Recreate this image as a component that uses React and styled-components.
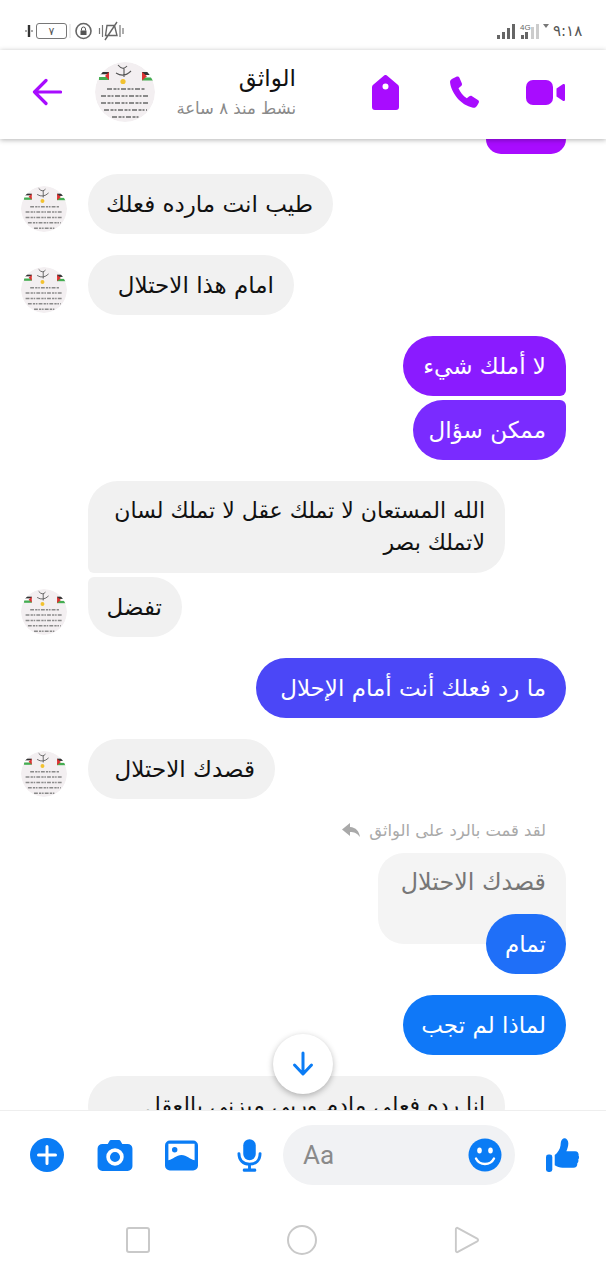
import React from "react";
import styled, { createGlobalStyle } from "styled-components";

const Global = createGlobalStyle`
  html, body { margin: 0; padding: 0; background: #fff; }
  * { box-sizing: border-box; }
`;

function Avatar({ size }) {
  return (
    <AvatarWrap $size={size}>
      <svg viewBox="0 0 60 60" width={size} height={size}>
        <circle cx="30" cy="30" r="30" fill="#f3eff1" />
        <rect x="4" y="10" width="10" height="2.500" fill="#333" />
        <rect x="4" y="12.500" width="10" height="2.500" fill="#fff" />
        <rect x="4" y="15" width="10" height="3" fill="#45ad52" />
        <path d="M14 10v8l-4-4Z" fill="#d33" />
        <rect x="47" y="10" width="12" height="3" fill="#333" />
        <rect x="47" y="13" width="12" height="2.500" fill="#fff" />
        <rect x="47" y="15.500" width="12" height="3" fill="#45ad52" />
        <path d="M47 10v8.500l5-4.200Z" fill="#d33" />
        <circle cx="28" cy="19.500" r="2.600" fill="#f2c230" />
        <path d="M23 3 q5 6 9 1 M21 11 q8 5 15 -2 M29 6 v9" fill="none" stroke="#555" strokeWidth="1.100" />
        <g stroke="#8a8a8a" strokeWidth="2" strokeDasharray="5 1.500 3 1 2 1.500" fill="none">
          <path d="M12 27 H50" />
          <path d="M6 34 H54" />
          <path d="M6 41 H54" />
          <path d="M9 48 H52" />
          <path d="M17 55 H44" />
        </g>
      </svg>
    </AvatarWrap>
  );
}

const ArrowBack = () => (
  <svg width="32" height="32" viewBox="0 0 32 32" fill="none" stroke="#a80cff" strokeWidth="3.200" strokeLinecap="round" strokeLinejoin="round">
    <path d="M30.500 16H4.500M16 4.500 4.500 16 16 27.500" />
  </svg>
);

const TagIcon = () => (
  <svg width="27" height="35" viewBox="0 0 27 35">
    <path fill="#a80cff" fillRule="evenodd" d="M11.800.7a2.600 2.600 0 0 1 3.400 0l10.600 9c.8.6 1.200 1.500 1.200 2.500V32a3 3 0 0 1-3 3H3a3 3 0 0 1-3-3V12.200c0-1 .4-1.900 1.200-2.500ZM13.500 8.500a3 3 0 1 0 0 6 3 3 0 0 0 0-6Z" />
  </svg>
);

const PhoneIcon = () => (
  <svg width="32" height="32" viewBox="0 0 32 34">
    <path fill="#a80cff" d="M2.500 2.800 6.800.7c1.400-.6 2.700-.1 3.300 1.200l2.500 5.800c.5 1.100.2 2.300-.7 3l-2.800 2.200c1.700 4 4.700 8 8.800 10.700l2.700-2.100c.9-.7 2-.7 2.900-.1l6.200 4c1.100.7 1.500 2 .9 3.100l-1.800 3.100c-.9 1.600-2.500 2.400-4.300 2.100C11.500 31.500 1 17.500.1 6.500 0 5 .9 3.600 2.500 2.800Z" />
  </svg>
);

const VideoIcon = () => (
  <svg width="39" height="25" viewBox="0 0 39 25">
    <rect x="0" y="0" width="27" height="25" rx="7" fill="#a80cff" />
    <path fill="#a80cff" d="m30.500 8.500 6.300-4.300c.9-.6 2.200 0 2.200 1v14.600c0 1-1.300 1.600-2.200 1l-6.300-4.300Z" />
  </svg>
);

const ReplyIcon = () => (
  <svg width="20" height="16" viewBox="0 0 20 16">
    <path fill="#a9a9a9" d="M9 1 1 7.500 9 14v-4c4 0 7 1 10 5-1-6-4-9.500-10-10Z" />
  </svg>
);

const DownIcon = () => (
  <svg width="24" height="26" viewBox="0 0 24 26" fill="none" stroke="#0a7cf5" strokeWidth="3" strokeLinecap="round" strokeLinejoin="round">
    <path d="M12 2v20M3.500 14 12 23l8.500-9" />
  </svg>
);

const PlusIcon = () => (
  <svg width="34" height="34" viewBox="0 0 34 34">
    <circle cx="17" cy="17" r="17" fill="#0a7cf5" />
    <path d="M17 8.500v17M8.500 17h17" stroke="#fff" strokeWidth="3" strokeLinecap="round" />
  </svg>
);

const CameraIcon = () => (
  <svg width="36" height="31" viewBox="0 0 36 32">
    <path fill="#0a7cf5" fillRule="evenodd" d="M12 1.500C12.500.5 13.500 0 14.500 0h7c1 0 2 .5 2.500 1.500L25.500 4H31a5 5 0 0 1 5 5v18a5 5 0 0 1-5 5H5a5 5 0 0 1-5-5V9a5 5 0 0 1 5-5h5.500ZM18 8.500a9 9 0 1 0 0 18 9 9 0 0 0 0-18Zm0 3.800a5.200 5.200 0 1 1 0 10.400 5.200 5.200 0 0 1 0-10.400Z" />
  </svg>
);

const ImageIcon = () => (
  <svg width="33" height="31" viewBox="0 0 34 31">
    <rect width="34" height="31" rx="5" fill="#0a7cf5" />
    <path fill="#fff" d="M3.500 3.500h27v17c-5-1-8-5.500-13.500-5.500S8.500 19.500 3.500 20.500Z" />
    <circle cx="10" cy="9.500" r="2.800" fill="#0a7cf5" />
  </svg>
);

const MicIcon = () => (
  <svg width="25" height="33" viewBox="0 0 26 34">
    <rect x="6.500" y="0" width="13" height="22" rx="6.500" fill="#0a7cf5" />
    <path d="M2 15c0 7 4.500 11 11 11s11-4 11-11" fill="none" stroke="#0a7cf5" strokeWidth="3" strokeLinecap="round" />
    <path d="M13 26v6" stroke="#0a7cf5" strokeWidth="3" />
    <rect x="6" y="30.500" width="14" height="3.500" rx="1.500" fill="#0a7cf5" />
  </svg>
);

const SmileIcon = () => (
  <svg width="34" height="34" viewBox="0 0 34 34">
    <circle cx="17" cy="17" r="16.500" fill="#0a7cf5" />
    <ellipse cx="11.500" cy="12.500" rx="2.300" ry="3" fill="#fff" />
    <ellipse cx="22.500" cy="12.500" rx="2.300" ry="3" fill="#fff" />
    <path d="M8 20.500c2 4 5 5.500 9 5.500s7-1.500 9-5.500" fill="none" stroke="#fff" strokeWidth="2.400" strokeLinecap="round" />
  </svg>
);

const LikeIcon = () => (
  <svg width="33" height="35" viewBox="0 0 34 36">
    <rect x="0" y="17" width="6.500" height="18" rx="2.500" fill="#0a7cf5" />
    <path fill="#0a7cf5" d="M9 17.500c3-2 5.500-6 6-10 .3-2.500.3-6 3-7 2.500-.8 5 1.500 5 5 0 3-1 6-2 8h9c3 0 4 2.500 3.500 4.500.8 1.200.8 3-.3 4.200.5 1.500 0 3-1 3.800.3 2.500-1 4.500-4 4.500H17c-3 0-5.500-1-8-2.500Z" />
  </svg>
);

const StatusLeft = () => (
  <svg width="101" height="20" viewBox="0 0 101 20" fill="none">
    <path d="M1 10h2M7 10h2" stroke="#555" strokeWidth="1.200" />
    <path d="M5 4v12" stroke="#333" strokeWidth="2.400" />
    <rect x="12.500" y="2.500" width="30" height="15" rx="2.500" stroke="#777" strokeWidth="1" />
    <text x="27.500" y="14" fontSize="11" fill="#555" textAnchor="middle" fontFamily="DejaVu Sans, sans-serif">٧</text>
    <path d="M46 3v14" stroke="#ddd" strokeWidth="1" />
    <circle cx="59.500" cy="10" r="7.500" stroke="#666" strokeWidth="1.600" />
    <rect x="56.500" y="9.500" width="6" height="4.500" fill="#555" />
    <path d="M57.500 9.500V8a2 2 0 0 1 4 0v1.500" stroke="#555" />
    <path d="M75.500 7v6M78.500 4v12M96 4v12M99 7v6" stroke="#777" strokeWidth="1.200" />
    <path d="M83 4.500h7.500l2.500 10H81.500ZM81 19 93 1" stroke="#666" strokeWidth="1.400" />
  </svg>
);

const Signal = () => (
  <svg width="56" height="20" viewBox="0 0 56 20">
    <g fill="#666">
      <rect x="0" y="14" width="3" height="4" />
      <rect x="5" y="11" width="3" height="7" />
      <rect x="10" y="7" width="3" height="11" />
      <rect x="15" y="3" width="3" height="15" />
      <rect x="24" y="14" width="3" height="4" />
      <rect x="28" y="11" width="3" height="7" />
    </g>
    <g fill="#ccc">
      <rect x="34" y="6" width="3" height="12" />
      <rect x="39" y="3" width="3" height="15" />
    </g>
    <text x="23" y="9" fontSize="8" fill="#666" fontFamily="Liberation Sans, sans-serif">4G</text>
    <path d="M46 3h6l-3 4Z" fill="#777" />
  </svg>
);

const messages = [
  { id: 1, side: "left", text: "طيب انت مارده فعلك", w: 245, gap: 20 },
  { id: 2, side: "left", text: "امام هذا الاحتلال", w: 206, gap: 21 },
  { id: 3, side: "right", text: "لا أملك شيء", w: 163, gap: 21, color: "#8a1bff", corner: "bottom" },
  { id: 4, side: "right", text: "ممكن سؤال", w: 153, gap: 4, color: "#7a2bff", corner: "top" },
  { id: 5, side: "left", text: "الله المستعان لا تملك عقل لا تملك لسان لاتملك بصر", w: 417, gap: 21, noAvatar: true, corner: "bottom", small: true },
  { id: 6, side: "left", text: "تفضل", w: 94, gap: 4, corner: "top" },
  { id: 7, side: "right", text: "ما رد فعلك أنت أمام الإحلال", w: 310, gap: 21, color: "#4b47f7" },
  { id: 8, side: "left", text: "قصدك الاحتلال", w: 187, gap: 21 },
];

function Message({ m }) {
  const bubble = (
    <Bubble $width={m.w} $color={m.color} $side={m.side} $corner={m.corner} $small={m.small}>
      {m.text}
    </Bubble>
  );
  if (m.side === "right") {
    return <RightRow $gap={m.gap}>{bubble}</RightRow>;
  }
  return (
    <LeftRow $gap={m.gap}>
      {m.noAvatar ? <AvatarSlot /> : <RowAvatar><Avatar size={46} /></RowAvatar>}
      {bubble}
    </LeftRow>
  );
}

export default function App() {
  return (
    <>
      <Global />
      <Screen>
        <StatusBar>
          <StatusLeft />
          <StatusEnd>
            <Signal />
            <Clock>٩:١٨</Clock>
          </StatusEnd>
        </StatusBar>
        <Header>
          <BackButton><ArrowBack /></BackButton>
          <Avatar size={60} />
          <TitleBlock>
            <Title>الواثق</Title>
            <Subtitle>نشط منذ ٨ ساعة</Subtitle>
          </TitleBlock>
          <Actions>
            <ActionSlot><TagIcon /></ActionSlot>
            <ActionSlot><PhoneIcon /></ActionSlot>
            <ActionSlot><VideoIcon /></ActionSlot>
          </Actions>
        </Header>
        <Thread>
          <TopSliver />
          {messages.map((m) => (
            <Message key={m.id} m={m} />
          ))}
          <ReplyNote>
            <ReplyIcon />
            <span>لقد قمت بالرد على الواثق</span>
          </ReplyNote>
          <QuoteRow>
            <Quote>قصدك الاحتلال</Quote>
          </QuoteRow>
          <RightRow $gap={0}>
            <Bubble $width={80} $color="#1f6ff8" $side="right">تمام</Bubble>
          </RightRow>
          <RightRow $gap={21}>
            <Bubble $width={163} $color="#0f78f8" $side="right">لماذا لم تجب</Bubble>
          </RightRow>
          <LeftRow $gap={21}>
            <AvatarSlot />
            <Bubble $width={417} $side="left" $small>انا رده فعلي مادم وربي ميزني بالعقل</Bubble>
          </LeftRow>
          <JumpButton><DownIcon /></JumpButton>
        </Thread>
        <Composer>
          <Tool $after={33}><PlusIcon /></Tool>
          <Tool $after={32}><CameraIcon /></Tool>
          <Tool $after={39}><ImageIcon /></Tool>
          <Tool $after={21}><MicIcon /></Tool>
          <InputPill>
            <Placeholder>Aa</Placeholder>
            <SmileIcon />
          </InputPill>
          <Tool $after={0} $before={31}><LikeIcon /></Tool>
        </Composer>
        <NavBar>
          <NavSquare />
          <NavCircle />
          <svg width="26" height="30" viewBox="0 0 28 30" fill="none">
            <path d="M2 3.500c0-1.500 1.200-2 2.200-1.300L25 13.500c1.300.8 1.300 2.200 0 3L4.200 27.800C3.200 28.500 2 28 2 26.500Z" stroke="#c9c9c9" strokeWidth="2" />
          </svg>
        </NavBar>
      </Screen>
    </>
  );
}

const Screen = styled.div`
  width: 606px;
  height: 1280px;
  display: flex;
  flex-direction: column;
  overflow: hidden;
  background: #fff;
  font-family: "DejaVu Sans", "Noto Sans", sans-serif;
`;

const StatusBar = styled.div`
  height: 50px;
  flex: none;
  padding: 11px 24px 0 24px;
  display: flex;
  align-items: center;
  justify-content: space-between;
  svg {
    display: block;
  }
`;

const StatusEnd = styled.div`
  display: flex;
  align-items: center;
`;

const Clock = styled.span`
  font-size: 15px;
  color: #555;
  width: 29px;
  text-align: right;
`;

const Header = styled.header`
  height: 89px;
  flex: none;
  padding: 0 21px 5px 30px;
  display: flex;
  align-items: center;
  background: #fff;
  box-shadow: 0 1px 5px rgba(0, 0, 0, 0.3);
  position: relative;
  z-index: 2;
`;

const BackButton = styled.div`
  width: 65px;
  display: flex;
  align-items: center;
`;

const AvatarWrap = styled.div`
  width: ${(p) => p.$size}px;
  height: ${(p) => p.$size}px;
  flex: none;
  border-radius: 50%;
  overflow: hidden;
  svg {
    display: block;
  }
`;

const TitleBlock = styled.div`
  width: 141px;
  text-align: right;
  direction: rtl;
  padding-bottom: 2px;
`;

const Title = styled.div`
  font-size: 23px;
  line-height: 30px;
  margin-bottom: 5px;
  color: #111;
`;

const Subtitle = styled.div`
  font-size: 16.500px;
  line-height: 22px;
  color: #8a8a8a;
  white-space: nowrap;
`;

const Actions = styled.div`
  margin-left: auto;
  display: grid;
  grid-template-columns: repeat(3, 80px);
`;

const ActionSlot = styled.div`
  display: flex;
  align-items: center;
  justify-content: center;
  svg {
    display: block;
  }
`;

const Thread = styled.main`
  flex: 1;
  min-height: 0;
  position: relative;
  overflow: hidden;
  padding: 0 40px 0 21px;
  display: flex;
  flex-direction: column;
`;

const TopSliver = styled.div`
  flex: none;
  height: 15px;
  width: 80px;
  align-self: flex-end;
  background: #a80cff;
  border-radius: 0 0 30px 30px;
`;

const Row = styled.div`
  flex: none;
  display: flex;
  margin-top: ${(p) => p.$gap}px;
`;

const LeftRow = styled(Row)`
  align-items: flex-end;
  gap: 21px;
`;

const RightRow = styled(Row)`
  justify-content: flex-end;
`;

const AvatarSlot = styled.div`
  width: 46px;
  flex: none;
`;

const RowAvatar = styled(AvatarSlot)`
  margin-bottom: 2px;
`;

const cornerRadius = (p) => {
  if (p.$corner === "bottom") {
    return p.$side === "right" ? "30px 30px 6px 30px" : "30px 30px 30px 6px";
  }
  if (p.$corner === "top") {
    return p.$side === "right" ? "30px 6px 30px 30px" : "6px 30px 30px 30px";
  }
  return "30px";
};

const Bubble = styled.div`
  width: ${(p) => p.$width}px;
  min-height: 60px;
  padding: 14px 20px 14px 8px;
  direction: rtl;
  text-align: right;
  font-size: ${(p) => (p.$small ? 22 : 23)}px;
  line-height: 32px;
  white-space: ${(p) => (p.$small ? "normal" : "nowrap")};
  color: ${(p) => (p.$color ? "#fff" : "#111")};
  background: ${(p) => p.$color || "#f1f1f1"};
  border-radius: ${cornerRadius};
`;

const ReplyNote = styled.div`
  flex: none;
  margin-top: 20px;
  align-self: flex-end;
  margin-right: 20px;
  height: 22px;
  display: flex;
  align-items: center;
  gap: 8px;
  font-size: 16.400px;
  color: #a9a9a9;
`;

const QuoteRow = styled(RightRow)`
  margin-top: 12px;
  margin-bottom: -30px;
`;

const Quote = styled.div`
  width: 188px;
  height: 91px;
  padding: 14px 20px 0 0;
  direction: rtl;
  text-align: right;
  font-size: 23.800px;
  line-height: 30px;
  color: #777;
  background: #f4f4f4;
  border-radius: 26px 26px 6px 26px;
  white-space: nowrap;
`;

const JumpButton = styled.div`
  position: absolute;
  left: 273px;
  bottom: 16px;
  width: 60px;
  height: 60px;
  border-radius: 50%;
  background: #fff;
  box-shadow: 0 2px 6px rgba(0, 0, 0, 0.28);
  display: flex;
  align-items: center;
  justify-content: center;
`;

const Composer = styled.div`
  height: 86px;
  flex: none;
  padding: 14px 0 11px 30px;
  border-top: 1px solid #eee;
  display: flex;
  align-items: center;
  background: #fff;
  position: relative;
  z-index: 1;
`;

const Tool = styled.div`
  flex: none;
  margin-left: ${(p) => p.$before || 0}px;
  margin-right: ${(p) => p.$after}px;
  svg {
    display: block;
  }
`;

const InputPill = styled.div`
  width: 232px;
  height: 60px;
  flex: none;
  border-radius: 30px;
  background: #f1f2f4;
  padding: 0 13px 0 20px;
  display: flex;
  align-items: center;
  justify-content: space-between;
`;

const Placeholder = styled.span`
  font-family: "Roboto", "Liberation Sans", sans-serif;
  font-size: 26px;
  color: #8a8a8a;
`;

const NavBar = styled.div`
  height: 84px;
  flex: none;
  display: flex;
  align-items: center;
  justify-content: space-between;
  padding: 4px 126px 0 126px;
`;

const NavSquare = styled.div`
  width: 24px;
  height: 26px;
  border: 2px solid #c9c9c9;
  border-radius: 3px;
`;

const NavCircle = styled.div`
  width: 30px;
  height: 30px;
  border: 2px solid #c9c9c9;
  border-radius: 50%;
`;
